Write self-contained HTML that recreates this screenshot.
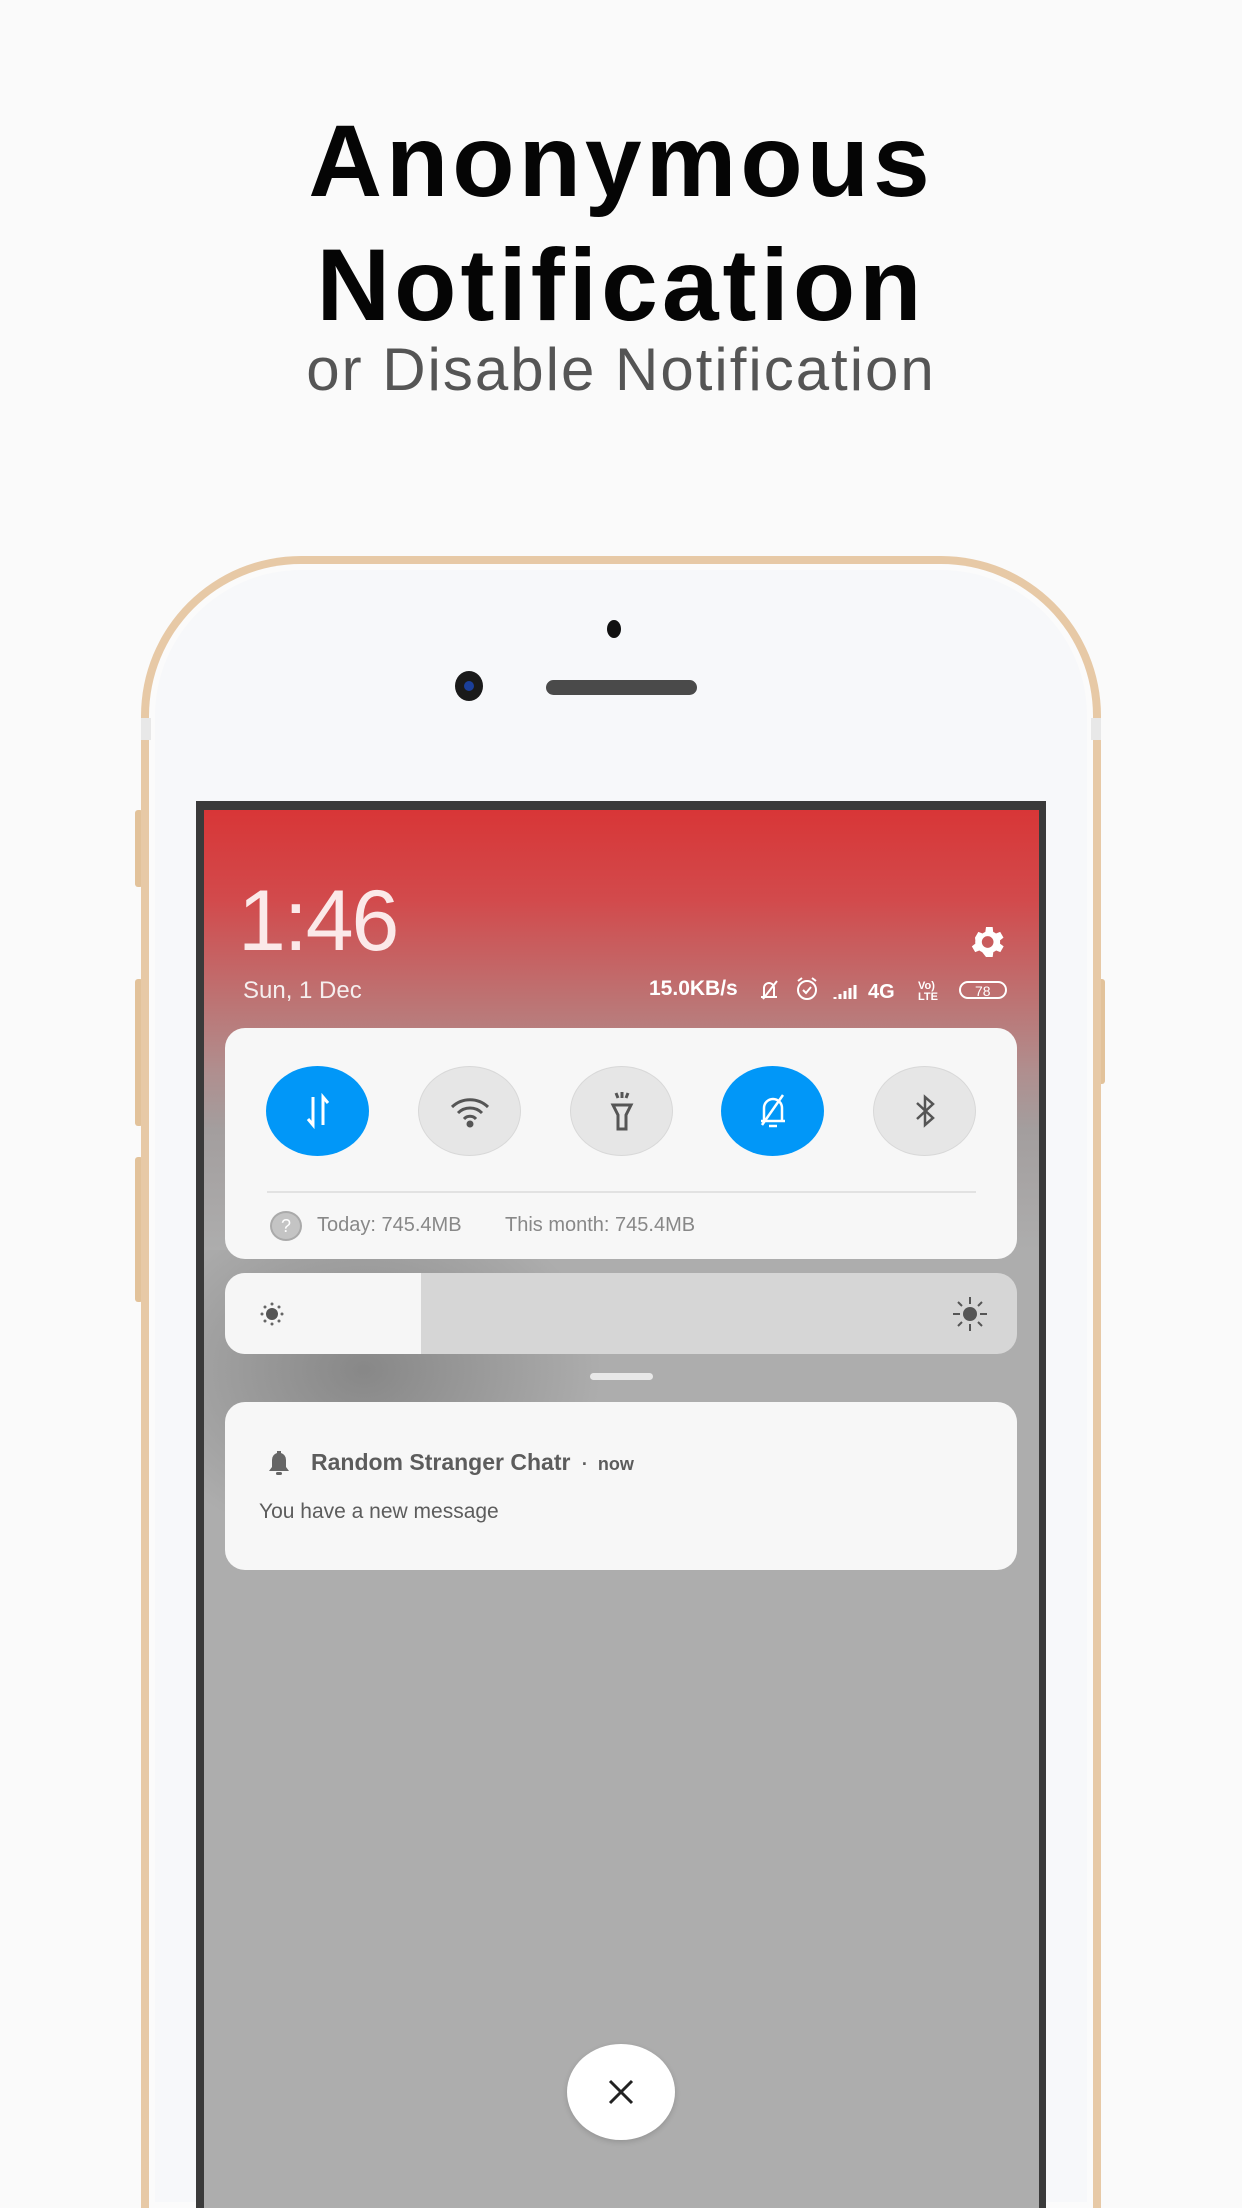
<!DOCTYPE html>
<html><head><meta charset="utf-8"><style>
*{margin:0;padding:0;box-sizing:border-box}
html,body{width:1242px;height:2208px;overflow:hidden}
body{background:#fafafa;font-family:"Liberation Sans",sans-serif}
#w{position:relative;width:1242px;height:2208px;overflow:hidden;background:#fafafa}
.abs{position:absolute}
h1{position:absolute;left:0;width:1242px;text-align:center;font-weight:bold;font-size:102px;color:#050505;letter-spacing:4px;line-height:1}
.sub{position:absolute;left:0;width:1242px;text-align:center;font-size:60px;color:#555;letter-spacing:2px;top:340px;line-height:1}
.phone{left:141px;top:556px;width:960px;height:1652px;border-radius:160px 160px 0 0;background:#f7f8fa;border:8px solid #e7c9a6;border-bottom:none;box-shadow:inset 0 0 0 6px #fbfbfb}
.screen{left:196px;top:801px;width:850px;height:1407px;background:#3a3a3a}
.inner{left:204px;top:810px;width:835px;height:1398px;background:linear-gradient(180deg,#d83637 0px,#d24a4c 90px,#bd7373 190px,#b08e8e 260px,#a39e9e 320px,#adadad 440px,#adadad 1398px)}
.card{background:#f7f7f7;border-radius:20px}
.tg{position:absolute;width:103px;height:90px;border-radius:50%;top:1066px;background:#e6e6e6;border:1px solid #d8d8d8;display:flex;align-items:center;justify-content:center}
.tg.b{background:#0197f8;border:none}
.t{color:#888;font-size:20px}
</style></head><body><div id="w">
<h1 style="top:110px">Anonymous</h1>
<h1 style="top:234px">Notification</h1>
<div class="sub">or Disable Notification</div>

<div class="abs" style="left:135px;top:810px;width:8px;height:77px;background:#e2c29a;border-radius:3px"></div>
<div class="abs" style="left:135px;top:979px;width:8px;height:147px;background:#e2c29a;border-radius:3px"></div>
<div class="abs" style="left:135px;top:1157px;width:8px;height:145px;background:#e2c29a;border-radius:3px"></div>
<div class="abs" style="left:1097px;top:979px;width:8px;height:105px;background:#e2c29a;border-radius:3px"></div>
<div class="abs phone"></div>
<div class="abs" style="left:141px;top:718px;width:10px;height:22px;background:#e8e8e8"></div>
<div class="abs" style="left:1091px;top:718px;width:10px;height:22px;background:#e8e8e8"></div>
<div class="abs" style="left:607px;top:620px;width:14px;height:18px;border-radius:50%;background:#111"></div>
<div class="abs" style="left:455px;top:671px;width:28px;height:30px;border-radius:50%;background:#1a1a1a"><div class="abs" style="left:9px;top:10px;width:10px;height:10px;border-radius:50%;background:#1b3f9a"></div></div>
<div class="abs" style="left:546px;top:680px;width:151px;height:15px;border-radius:8px;background:#4a4a4a"></div>

<div class="abs screen"></div>
<div class="abs inner"></div>
<div class="abs" style="left:204px;top:1250px;width:400px;height:300px;background:radial-gradient(ellipse at 40% 40%,rgba(90,90,90,.45),rgba(160,160,160,0) 70%)"></div>

<div class="abs" style="left:238px;top:878px;font-size:86px;color:#fbe9e9;line-height:1;font-family:'Liberation Sans',sans-serif;font-weight:100;letter-spacing:-2px">1:46</div>
<div class="abs" style="left:243px;top:977px;font-size:24px;color:#f5eeee">Sun, 1 Dec</div>
<svg class="abs" style="left:966px;top:922px" width="40" height="40" viewBox="0 0 24 24"><path fill="#fff" d="M19.4 13a7.5 7.5 0 000-2l2.1-1.6-2-3.5-2.5 1a7 7 0 00-1.7-1L15 3h-4l-.4 2.9a7 7 0 00-1.7 1l-2.5-1-2 3.5L4.6 11a7.5 7.5 0 000 2l-2.1 1.6 2 3.5 2.5-1a7 7 0 001.7 1L11 21h4l.4-2.9a7 7 0 001.7-1l2.5 1 2-3.5zM12 15.5A3.5 3.5 0 1112 8.5a3.5 3.5 0 010 7z" transform="translate(1 0)"/></svg>
<div class="abs" style="left:649px;top:977px;font-size:21px;font-weight:bold;color:#fff">15.0KB/s</div>
<svg class="abs" style="left:755px;top:975px" width="255" height="30" viewBox="0 0 255 30" fill="none" stroke="#fff" stroke-width="2">
<path d="M6 22h16M9 21v-8a5 5 0 0110 0v8M8 24L22 6"/>
<circle cx="52" cy="15" r="9"/><path d="M48 15l3 3 5-6M43 6l4-3M61 6l-4-3"/>
<path d="M80 24v-2M85 24v-5M90 24v-8M95 24v-11M100 24v-14" stroke-width="3"/>
<text x="113" y="23" fill="#fff" stroke="none" font-size="20" font-weight="bold" font-family="Liberation Sans">4G</text>
<text x="163" y="14" fill="#fff" stroke="none" font-size="11" font-weight="bold" font-family="Liberation Sans">Vo)</text>
<text x="163" y="25" fill="#fff" stroke="none" font-size="11" font-weight="bold" font-family="Liberation Sans">LTE</text>
<rect x="205" y="7" width="46" height="16" rx="8"/>
<text x="220" y="21" fill="#fff" stroke="none" font-size="14" font-family="Liberation Sans">78</text>
</svg>

<div class="abs card" style="left:225px;top:1028px;width:792px;height:231px"></div>
<div class="tg b" style="left:266px"><svg width="40" height="40" viewBox="0 0 40 40" fill="none" stroke="#fff" stroke-width="3"><path d="M15 6v28l-5-6M25 34V6l5 6"/></svg></div>
<div class="tg" style="left:418px"><svg width="44" height="40" viewBox="0 0 44 40" fill="none" stroke="#555" stroke-width="3"><path d="M4 16a26 26 0 0136 0M10 22a17 17 0 0124 0M16 28a8 8 0 0112 0"/><circle cx="22" cy="33" r="2" fill="#555"/></svg></div>
<div class="tg" style="left:570px"><svg width="40" height="44" viewBox="0 0 40 44" fill="none" stroke="#555" stroke-width="3"><path d="M11 16h18l-5 10v14h-8V26zM14 4l2 5M20 3v6M26 4l-2 5"/></svg></div>
<div class="tg b" style="left:721px"><svg width="40" height="44" viewBox="0 0 40 44" fill="none" stroke="#fff" stroke-width="2.5"><path d="M8 32h24M11 31v-12a9 9 0 0118 0v12M9 36L30 6M16 37h8"/></svg></div>
<div class="tg" style="left:873px"><svg width="40" height="44" viewBox="0 0 40 44" fill="none" stroke="#555" stroke-width="2.5"><path d="M12 14l16 15-8 7V8l8 7-16 15"/></svg></div>
<div class="abs" style="left:267px;top:1191px;width:709px;height:2px;background:#e2e2e2"></div>
<div class="abs" style="left:270px;top:1211px;width:32px;height:30px;border-radius:50%;background:#c4c4c4;border:2px solid #aaa;color:#fff;font-size:18px;text-align:center;line-height:26px">?</div>
<div class="abs t" style="left:317px;top:1214px">Today: 745.4MB</div>
<div class="abs t" style="left:505px;top:1214px">This month: 745.4MB</div>

<div class="abs" style="left:225px;top:1273px;width:792px;height:81px;border-radius:20px;background:#d6d6d6;overflow:hidden"><div style="width:196px;height:81px;background:#f6f6f6"></div></div>
<svg class="abs" style="left:256px;top:1298px" width="32" height="32" viewBox="0 0 32 32" fill="#555"><circle cx="16" cy="16" r="6"/><g fill="#666"><circle cx="16" cy="6" r="1.5"/><circle cx="16" cy="26" r="1.5"/><circle cx="6" cy="16" r="1.5"/><circle cx="26" cy="16" r="1.5"/><circle cx="9" cy="9" r="1.5"/><circle cx="23" cy="9" r="1.5"/><circle cx="9" cy="23" r="1.5"/><circle cx="23" cy="23" r="1.5"/></g></svg>
<svg class="abs" style="left:950px;top:1294px" width="40" height="40" viewBox="0 0 40 40" fill="#555" stroke="#555" stroke-width="2"><circle cx="20" cy="20" r="7" stroke="none"/><path d="M20 3v7M20 30v7M3 20h7M30 20h7M8 8l4 4M28 28l4 4M8 32l4-4M28 12l4-4"/></svg>
<div class="abs" style="left:590px;top:1373px;width:63px;height:7px;border-radius:4px;background:#e8e8e8"></div>

<div class="abs card" style="left:225px;top:1402px;width:792px;height:168px"></div>
<svg class="abs" style="left:264px;top:1448px" width="30" height="30" viewBox="0 0 30 30" fill="#666"><path d="M5 23h20l-3-4v-7a7 7 0 00-5-7V3h-4v2a7 7 0 00-5 7v7z"/><rect x="12" y="24" width="6" height="3" rx="1.5"/></svg>
<div class="abs" style="left:311px;top:1449px;font-size:23px;font-weight:bold;color:#5c5c5c">Random Stranger Chatr <span style="font-size:18px">&nbsp;·&nbsp; now</span></div>
<div class="abs" style="left:259px;top:1500px;font-size:21px;color:#5c5c5c">You have a new message</div>

<div class="abs" style="left:567px;top:2044px;width:108px;height:96px;border-radius:50%;background:#fff;box-shadow:0 2px 6px rgba(0,0,0,.15)"></div>
<svg class="abs" style="left:606px;top:2077px" width="30" height="30" viewBox="0 0 30 30" stroke="#222" stroke-width="3"><path d="M4 4l22 22M26 4L4 26"/></svg>
</div></body></html>
